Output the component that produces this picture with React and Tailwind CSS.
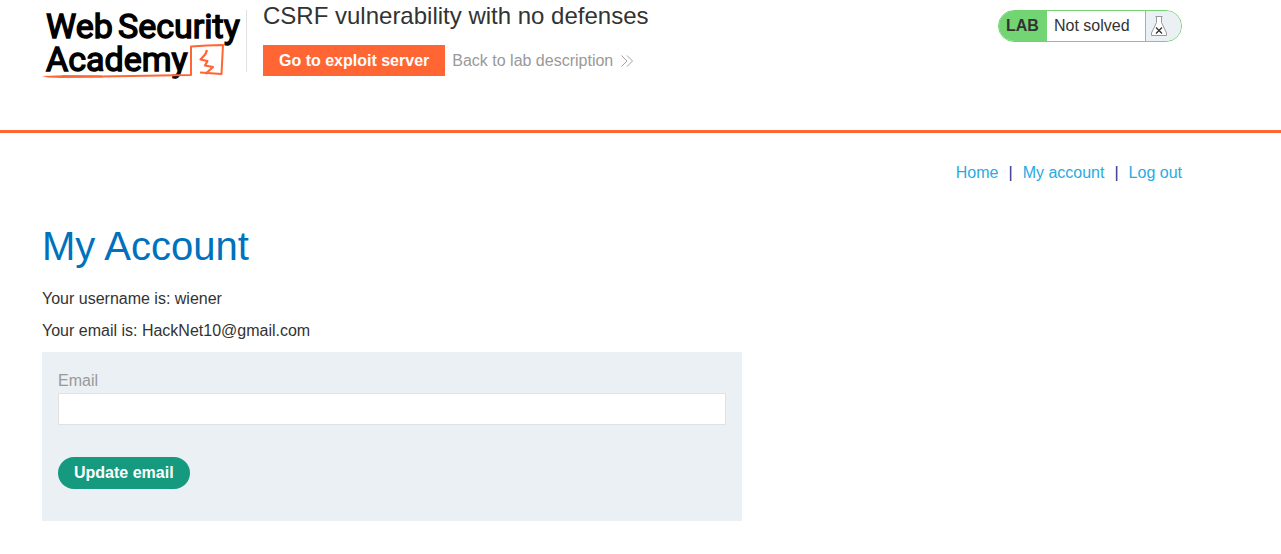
function Logo() {
  return (
    <svg
      className="h-[74px] w-[201px] shrink-0"
      viewBox="0 0 201 74"
      role="img"
      aria-label="Web Security Academy"
    >
      <g
        fontFamily="Roboto, sans-serif"
        fontSize="34"
        fontWeight="400"
        fill="#000"
        stroke="#000"
        strokeWidth="1.400"
      >
        <text x="4" y="33">Web</text>
        <text x="76" y="33">Security</text>
        <text x="4" y="66">Academy</text>
      </g>
      <g fill="none" stroke="#ff6633" strokeLinejoin="round">
        <path d="M20 71.300L60 71.500L149 70V41.500L165 40.500L181 40L179.500 69L158 67.500" strokeWidth="2" />
        <path d="M0 71L22 70.200L60 70.500V72.500L20 73L6 72.500Z" fill="#ff6633" stroke="none" />
        <path d="M165 45L163.500 49L158.500 54.500L165.500 56L163 60.500L171 62L165.500 67L164 69" strokeWidth="2.200" />
      </g>
    </svg>
  );
}

function ChevronsIcon() {
  return (
    <svg className="h-3 w-3" viewBox="0 0 12 12" fill="none" stroke="#999" aria-hidden="true">
      <path d="M.5 .5L6 6L.5 11.500M6 .5L11.500 6L6 11.500" strokeWidth="0.9" />
    </svg>
  );
}

function FlaskIcon() {
  return (
    <svg className="h-5 w-4" viewBox="0 0 16 20" fill="none" aria-hidden="true">
      <path d="M5.500 .5V6.500L.5 16.500V19.500H15.500V16.500L10.500 6.500V.5Z" fill="#fff" />
      <path d="M4.500 .5H11.500M5.500 .5V6.500L.5 17V19.500H15.500V17L10.500 6.500V.5" stroke="#999" />
      <path d="M5 11.500L11 17.500M11 11.500L5 17.500" stroke="#333" strokeWidth="1.300" />
    </svg>
  );
}

function LabStatus() {
  return (
    <div className="mt-2.5 flex h-8 shrink-0 overflow-hidden rounded-full border border-[#72d472] bg-white leading-[30px]">
      <span className="w-12 bg-[#72d472] pl-[7px] font-bold">LAB</span>
      <span className="w-[98px] pl-[7px]">Not solved</span>
      <span className="flex w-9 items-center border-l border-[#72d472] bg-[#eaf0f3] pl-[5px]">
        <FlaskIcon />
      </span>
    </div>
  );
}

export default function App() {
  return (
    <div className="bg-white font-['Liberation_Sans',Arial,sans-serif] text-base text-[#333332]">
      <header className="border-b-[3px] border-[#ff6633]">
        <div className="flex h-[130px] max-w-[1182px] items-start justify-between pl-[42px]">
          <div className="flex">
            <a href="#academy" className="mt-[5px] block">
              <Logo />
            </a>
            <div className="mt-2.5 ml-[3px] h-[62px] w-px bg-[#e1e1e1]" />
            <div className="ml-4">
              <h1 className="text-2xl leading-8">CSRF vulnerability with no defenses</h1>
              <div className="mt-[13px] flex items-center gap-[7px]">
                <a
                  href="#exploit-server"
                  className="block bg-[#ff6633] px-4 leading-[31px] font-bold text-white"
                >
                  Go to exploit server
                </a>
                <a href="#lab" className="flex items-center gap-2 text-[#999]">
                  Back to lab description
                  <ChevronsIcon />
                </a>
              </div>
            </div>
          </div>
          <LabStatus />
        </div>
      </header>
      <main className="max-w-[1182px] pt-7 pl-[42px]">
        <nav className="flex justify-end gap-2.5 text-[#29abe2]">
          <a href="#home">Home</a>
          <span className="text-[#0d3c8c]">|</span>
          <a href="#account">My account</a>
          <span className="text-[#0d3c8c]">|</span>
          <a href="#logout">Log out</a>
        </nav>
        <h2 className="mt-9 text-[40px] leading-[50px] text-[#0071bc]">My Account</h2>
        <p className="mt-4">Your username is: wiener</p>
        <p className="mt-2">Your email is: HackNet10@gmail.com</p>
        <form
          className="mt-[9px] max-w-[700px] bg-[#eaf0f3] px-4 pt-4 pb-8"
          onSubmit={(event) => event.preventDefault()}
        >
          <label htmlFor="email" className="block leading-[25px] text-[#999]">
            Email
          </label>
          <input
            id="email"
            type="email"
            className="block h-8 w-full border border-[#e1e1e1] bg-white px-2 text-[#333332]"
          />
          <button
            type="submit"
            className="mt-8 block h-8 rounded-full bg-[#159a80] px-4 font-bold text-white"
          >
            Update email
          </button>
        </form>
      </main>
    </div>
  );
}
